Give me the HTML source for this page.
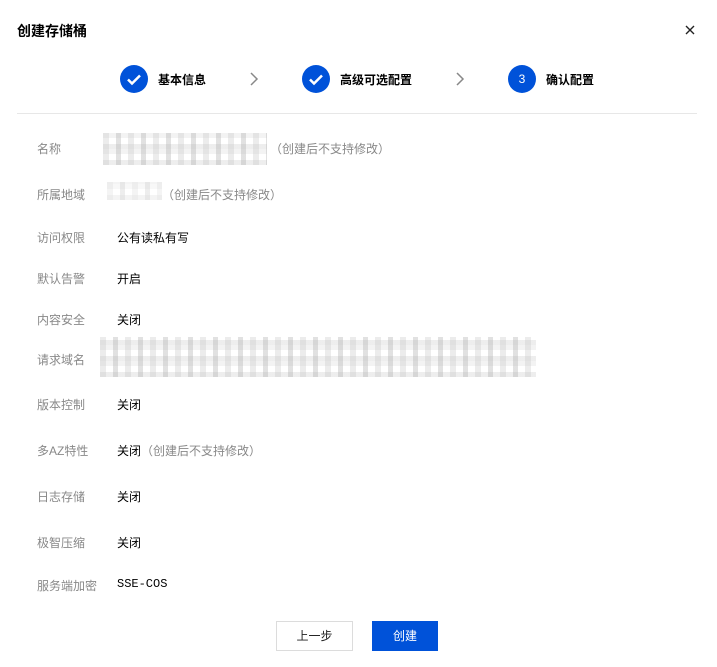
<!DOCTYPE html>
<html><head><meta charset="utf-8"><style>
body{margin:0;width:717px;height:667px;background:#fff;font-family:"Liberation Sans","Noto Sans CJK SC",sans-serif;position:relative;overflow:hidden;color:#000}
.a{position:absolute;white-space:nowrap}
.t{font-size:14px;font-weight:bold;color:#000}
.lab{font-size:12px;color:#888;left:37px}
.val{font-size:12px;color:#000;left:117px}
.note{color:#888}
.circ{position:absolute;width:28px;height:28px;border-radius:50%;background:#0052d9;color:#fff;font-size:12px;text-align:center;line-height:28px}
.st{font-size:12px;font-weight:bold}
.blur{position:absolute;background:
repeating-linear-gradient(90deg,rgba(200,200,200,.35) 0 6px,transparent 6px 13px,rgba(170,170,170,.35) 13px 18px,transparent 18px 25px),
repeating-linear-gradient(0deg,rgba(220,220,220,.5) 0 5px,transparent 5px 11px,rgba(235,235,235,.6) 11px 16px);}
</style></head><body>
<div class="a t" style="left:17px;top:21px">创建存储桶</div>
<svg class="a" style="left:685px;top:25px" width="10" height="10"><path d="M1 1l8 8M9 1l-8 8" stroke="#222" stroke-width="1.4"/></svg>

<div class="circ" style="left:120px;top:65px"><svg width="28" height="28" viewBox="0 0 28 28"><path d="M8 14.5l4 4 8-8" stroke="#fff" stroke-width="2.5" fill="none"/></svg></div>
<div class="a st" style="left:158px;top:71px">基本信息</div>
<svg class="a" style="left:249px;top:71px" width="10" height="16"><path d="M2 2l6 6-6 6" stroke="#888" stroke-width="1.5" fill="none"/></svg>
<div class="circ" style="left:302px;top:65px"><svg width="28" height="28" viewBox="0 0 28 28"><path d="M8 14.5l4 4 8-8" stroke="#fff" stroke-width="2.5" fill="none"/></svg></div>
<div class="a st" style="left:340px;top:71px">高级可选配置</div>
<svg class="a" style="left:455px;top:71px" width="10" height="16"><path d="M2 2l6 6-6 6" stroke="#888" stroke-width="1.5" fill="none"/></svg>
<div class="circ" style="left:508px;top:65px">3</div>
<div class="a st" style="left:546px;top:71px">确认配置</div>
<div class="a" style="left:17px;top:113px;width:680px;height:1px;background:#e7e7e7"></div>

<div class="a lab" style="top:140px">名称</div>
<div class="blur" style="left:103px;top:133px;width:164px;height:32px"></div>
<div class="a val note" style="left:270px;top:140px">（创建后不支持修改）</div>
<div class="a lab" style="top:186px">所属地域</div>
<div class="blur" style="left:107px;top:182px;width:55px;height:18px;opacity:.6"></div>
<div class="a val note" style="left:162px;top:186px">（创建后不支持修改）</div>
<div class="a lab" style="top:229px">访问权限</div><div class="a val" style="top:229px">公有读私有写</div>
<div class="a lab" style="top:270px">默认告警</div><div class="a val" style="top:270px">开启</div>
<div class="a lab" style="top:311px">内容安全</div><div class="a val" style="top:311px">关闭</div>
<div class="a lab" style="top:351px">请求域名</div>
<div class="blur" style="left:100px;top:337px;width:436px;height:40px"></div>
<div class="a lab" style="top:396px">版本控制</div><div class="a val" style="top:396px">关闭</div>
<div class="a lab" style="top:442px">多AZ特性</div><div class="a val" style="top:442px">关闭<span class="note">（创建后不支持修改）</span></div>
<div class="a lab" style="top:488px">日志存储</div><div class="a val" style="top:488px">关闭</div>
<div class="a lab" style="top:534px">极智压缩</div><div class="a val" style="top:534px">关闭</div>
<div class="a lab" style="top:577px">服务端加密</div><div class="a val" style="top:577px;font-family:'Liberation Mono',monospace">SSE-COS</div>

<div class="a" style="left:276px;top:621px;width:75px;height:28px;border:1px solid #dcdcdc;text-align:center;line-height:28px;font-size:12px;color:#222">上一步</div>
<div class="a" style="left:372px;top:621px;width:66px;height:30px;background:#0052d9;text-align:center;line-height:30px;font-size:12px;color:#fff">创建</div>
</body></html>
